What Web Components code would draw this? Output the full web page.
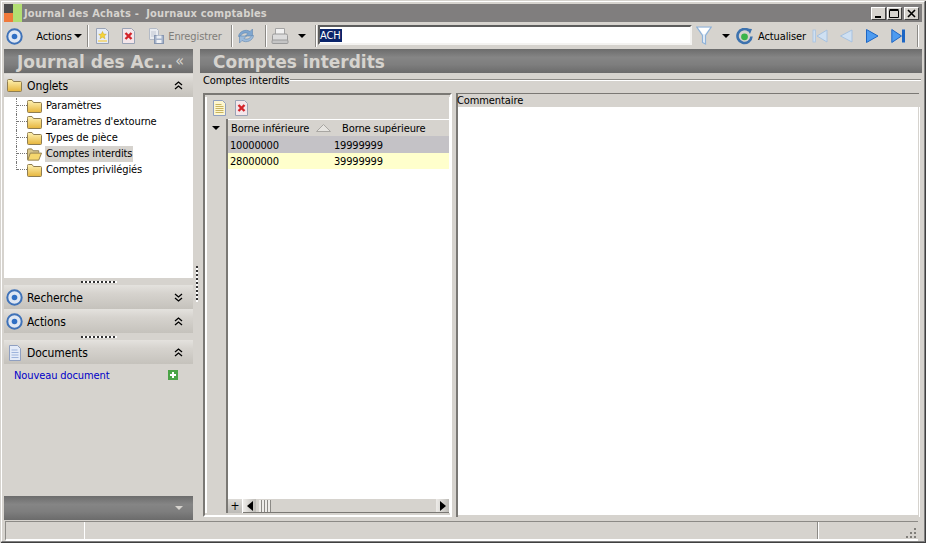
<!DOCTYPE html>
<html lang="fr"><head><meta charset="utf-8"><title>Journal des Achats</title>
<style>
html,body{margin:0;padding:0;background:#d6d3ce;overflow:hidden}
body{font:11px "DejaVu Sans Condensed","DejaVu Sans",sans-serif;font-stretch:condensed;color:#000}
</style></head><body>
<app-window>
  <win-titlebar slot="title">Journal des Achats -&nbsp; Journaux comptables</win-titlebar>
  <win-toolbar slot="toolbar"></win-toolbar>
  <nav-pane slot="nav"></nav-pane>
  <content-pane slot="content"></content-pane>
  <status-bar slot="status"></status-bar>
</app-window>
<script>
const FONT='"DejaVu Sans Condensed","DejaVu Sans",sans-serif';
const folderGrad=`<defs><linearGradient id="f" x1="0" y1="0" x2="0" y2="1"><stop offset="0" stop-color="#fff3b5"/><stop offset="1" stop-color="#e6b53c"/></linearGradient></defs>`;
const ICONS={
 target:`<svg width="17" height="17" viewBox="0 0 17 17"><circle cx="8.5" cy="8.5" r="7.2" fill="#dfe7f3" stroke="#3f72b8" stroke-width="2"/><circle cx="8.5" cy="8.5" r="2.8" fill="#2f6fc4"/></svg>`,
 folder:`<svg width="15" height="13" viewBox="0 0 15 13">${folderGrad}<path d="M.5 2.5V1.500Q.5.5 1.5.5H5l1.500 2h7q1 0 1 1v8q0 1-1 1h-12q-1 0-1-1z" fill="url(#f)" stroke="#8f7d50"/></svg>`,
 open:`<svg width="16" height="13" viewBox="0 0 16 13"><path d="M.5 12V1.500Q.5.5 1.500.5H5l1.500 2h6v2" fill="#d8c68a" stroke="#8f7d50"/><path d="M.8 12.500 3.500 5h12l-3 7.500z" fill="#f6d76e" stroke="#8f7d50"/></svg>`,
 doc:`<svg width="14" height="16" viewBox="0 0 14 16"><path d="M1.500.5h8l3 3v12h-11z" fill="#e4ebf8" stroke="#8f9fc0"/><path d="M3.500 5h6M3.500 7.500h7M3.500 10h7M3.500 12.500h7" stroke="#9db3dc"/></svg>`,
 newdoc:`<svg width="15" height="16" viewBox="0 0 15 16"><path d="M1.500.5h9l3 3v12h-12z" fill="#e6ecf6" stroke="#9aa3b5"/><path d="M7.500 3.500l1.100 2.600 2.700.2-2.100 1.700.8 2.700-2.500-1.500-2.500 1.500.8-2.700-2.100-1.700 2.700-.2z" fill="#f5d53a" stroke="#d0a91f" stroke-width=".5"/><path d="M3 13h9" stroke="#f0d98a" stroke-width="2"/></svg>`,
 griddoc:`<svg width="15" height="16" viewBox="0 0 15 16"><path d="M1.500.5h9l3 3v12h-12z" fill="#fdf6cf" stroke="#8f9fc0"/><path d="M3.500 4.500h6M3.500 6.500h8M3.500 8.500h8M3.500 10.500h8M3.500 12.500h8" stroke="#c9b45e"/></svg>`,
 deldoc:`<svg width="15" height="16" viewBox="0 0 15 16"><path d="M1.500.5h9l3 3v12h-12z" fill="#f4e6ea" stroke="#9aa3b5"/><path d="M4.500 5l6 6M10.500 5l-6 6" stroke="#d3232a" stroke-width="2.400"/></svg>`,
 save:`<svg width="16" height="16" viewBox="0 0 16 16"><path d="M1.500.5h7l2 2v9h-9z" fill="#e9ecf1" stroke="#b3bac6"/><path d="M3 4h5M3 6h5M3 8h5" stroke="#c0c6d2"/><rect x="6.500" y="7.500" width="9" height="8" fill="#a5b3ca" stroke="#8796b0"/><rect x="8.500" y="7.500" width="5" height="3" fill="#e8ecf2"/><rect x="8.500" y="12" width="5" height="3" fill="#f2f3f6"/></svg>`,
 sync:`<svg width="18" height="18" viewBox="0 0 18 18"><path d="M1.500 9.500C2 4.500 8.500 1.500 13 4.500L15.500 2v7h-7l2.500-2.500C8 5 4.500 6.500 3.500 9.500z" fill="#7fa6cf" stroke="#5f86b0" stroke-width=".6"/><path d="M16.500 8.500c-.5 5-7 8-11.500 5L2.500 16V9h7L7 11.500c3 1.500 6.500 0 7.500-3z" fill="#9dbbdb" stroke="#5f86b0" stroke-width=".6"/></svg>`,
 print:`<svg width="18" height="17" viewBox="0 0 18 17"><path d="M4.500.5h9v6h-9z" fill="#f2f2f2" stroke="#a4a4a4"/><path d="M1.500 7.500q0-1.500 1.500-1.500h12q1.500 0 1.500 1.500v5h-15z" fill="#dcdcdc" stroke="#9a9a9a"/><rect x="1" y="12" width="16" height="3.500" rx="1" fill="#c4c4c4" stroke="#9a9a9a"/></svg>`,
 funnel:`<svg width="16" height="20" viewBox="0 0 16 20"><path d="M.8 1h14.400L9.500 9.500V18l-3-1.500v-7z" fill="#e6eff9" stroke="#8fb2d8" stroke-width="1.200"/><path d="M2.500 2h11L9 8H7z" fill="#fff"/></svg>`,
 reload:`<svg width="17" height="17" viewBox="0 0 17 17"><path d="M12.800 2.500A7 7 0 1 0 15.500 8.500" fill="none" stroke="#3d72ae" stroke-width="2.600"/><path d="M10.500 .5l5.500 .5-2 5z" fill="#3d72ae"/><circle cx="8.500" cy="8.800" r="3.400" fill="#3bb44a"/></svg>`,
 first:`<svg width="16" height="16" viewBox="0 0 16 16"><rect x="1" y="2" width="2.500" height="12" fill="#cfe0f2" stroke="#a7c2e0" stroke-width=".8"/><path d="M15 2v12L5 8z" fill="#cfe0f2" stroke="#a7c2e0"/></svg>`,
 prev:`<svg width="16" height="16" viewBox="0 0 16 16"><path d="M14 2v12L2.500 8z" fill="#cfe0f2" stroke="#a7c2e0"/></svg>`,
 next:`<svg width="14" height="16" viewBox="0 0 14 16"><path d="M1.500 1.500v13L13 8z" fill="#4d9bf0" stroke="#1d66c4"/></svg>`,
 last:`<svg width="15" height="16" viewBox="0 0 15 16"><path d="M.8 1.500v13L10.500 8z" fill="#4d9bf0" stroke="#1d66c4"/><rect x="11" y="1.500" width="3" height="13" fill="#1d66c4"/></svg>`,
 up:`<svg width="9" height="9" viewBox="0 0 9 9"><path d="M1 4l3.500-3L8 4M1 8l3.500-3L8 8" fill="none" stroke="#000" stroke-width="1.300"/></svg>`,
 down:`<svg width="9" height="9" viewBox="0 0 9 9"><path d="M1 1l3.500 3L8 1M1 5l3.500 3L8 5" fill="none" stroke="#000" stroke-width="1.300"/></svg>`,
 caret:`<svg width="8" height="4" viewBox="0 0 8 4"><path d="M0 0h8L4 4z" fill="#000"/></svg>`,
 plus:`<svg width="10" height="10" viewBox="0 0 10 10"><rect width="10" height="10" fill="#4aa346"/><path d="M5 2v6M2 5h6" stroke="#fff" stroke-width="2"/></svg>`
};
const def=(name,css,html)=>customElements.define(name,class extends HTMLElement{
 constructor(){super();this.attachShadow({mode:'open'}).innerHTML=`<style>:host{font-stretch:condensed}${css}</style>`+(typeof html==='function'?html(this):html);}
 connectedCallback(){if(typeof html==='function'&&!this.done){this.done=1;this.shadowRoot.innerHTML=`<style>:host{font-stretch:condensed}${css}</style>`+html(this);}}
});
const BAND='linear-gradient(#6c6c6c,#858585 35%,#7e7e7e 65%,#6b6b6b)';

def('app-window',`
 :host{display:flex;flex-direction:column;box-sizing:border-box;width:926px;height:543px;background:#d6d3ce;
  padding:4px 4px 2px;box-shadow:inset 0 1px 0 #d6d3ce,inset 1px 0 0 #d6d3ce,inset -1px 0 0 #404040,inset 0 -1px 0 #404040;position:relative;
  font:11px ${FONT};letter-spacing:-.1px;color:#000;overflow:hidden}
 :host::before{content:"";position:absolute;inset:1px;border:1px solid;border-color:#fff #808080 #808080 #fff;pointer-events:none}
 .main{display:flex;flex:1;min-height:0}
`,`<slot name="title"></slot><slot name="toolbar"></slot><div class="main"><slot name="nav"></slot><nav-splitter></nav-splitter><slot name="content"></slot></div><slot name="status"></slot>`);

def('win-titlebar',`
 :host{display:flex;align-items:center;height:18px;background:#807e7e;color:#d6d3ce;font:bold 11px ${FONT};font-stretch:condensed;letter-spacing:.17px;flex:none}
 .logo{width:18px;height:18px;display:grid;grid-template-columns:9px 9px;grid-template-rows:9px 9px;margin-right:2px;flex:none}
 .t{flex:1;white-space:nowrap}
 .b{width:15px;height:13px;background:#d6d3ce;box-sizing:border-box;border:1px solid;border-color:#fff #404040 #404040 #fff;margin-left:1px;display:grid;place-items:center}
 .b+.b+.b{margin-left:2px;margin-right:3px}
`,`<div class="logo"><i style="background:#4b4b4b"></i><i style="background:#b2de72;grid-row:1/3;grid-column:2"></i><i style="background:#f0793a"></i></div>
 <div class="t"><slot></slot></div>
 <div class="b"><svg width="9" height="9"><rect x="1" y="7" width="6" height="2"/></svg></div>
 <div class="b"><svg width="11" height="9"><path d="M.5 1.500h9v7h-9zM.5.500h9" fill="none" stroke="#000"/></svg></div>
 <div class="b"><svg width="9" height="9"><path d="M1 1l7 7M8 1l-7 7" stroke="#000" stroke-width="1.600"/></svg></div>`);

const tb=(w,inner,ml=0)=>`<span class="i" style="width:${w}px;margin-left:${ml}px">${inner}</span>`;
def('win-toolbar',`
 :host{display:flex;align-items:center;box-sizing:border-box;height:26px;padding-top:2px;flex:none;background:#d6d3ce;white-space:nowrap}
 .i{display:inline-flex;align-items:center;justify-content:center;flex:none;height:22px}
 .sep{width:2px;height:22px;background:linear-gradient(90deg,#8c8a86 50%,#fff 50%);flex:none}
 .input{flex:none;width:374px;height:20px;box-sizing:border-box;margin:-2px 0 0 1px;border:2px solid;border-color:#5c5c5c #f4f3f1 #f4f3f1 #5c5c5c;background:#fff;display:flex;align-items:center}
 .input b{font-weight:normal;background:#0a246a;color:#fff;line-height:13px;padding:0 1px 0 0}
 .dis{color:#7f7d79}
`,`${tb(17,ICONS.target,2)}${tb(36,'Actions',13)}${tb(8,ICONS.caret,2)}<span class="sep" style="margin-left:5px"></span>
 ${tb(15,ICONS.newdoc,6)}${tb(15,ICONS.deldoc,11)}${tb(16,ICONS.save,12)}${tb(56,'<span class="dis">Enregistrer</span>',3)}<span class="sep" style="margin-left:8px"></span>
 ${tb(18,ICONS.sync,4)}<span class="sep" style="margin-left:10px"></span>${tb(18,ICONS.print,4)}${tb(8,ICONS.caret,9)}<span class="sep" style="margin-left:9px"></span>
 <div class="input"><b>ACH</b></div>
 ${tb(16,ICONS.funnel,4)}${tb(8,ICONS.caret,10)}${tb(17,ICONS.reload,6)}${tb(48,'Actualiser',5)}
 ${tb(16,ICONS.first,6)}${tb(16,ICONS.prev,10)}${tb(14,ICONS.next,11)}${tb(15,ICONS.last,12)}<span class="sep" style="margin-left:11px"></span>`);

def('band-title',`
 :host{display:flex;align-items:center;box-sizing:border-box;height:24px;background:${BAND};color:#d6d3ce;font:bold 17px "DejaVu Sans",sans-serif;font-stretch:normal;letter-spacing:0;white-space:nowrap;padding:2px 0 0 13px;flex:none;overflow:hidden}
 .t{flex:1}
 .c{font:normal 16px ${FONT};padding-right:9px;margin-top:-3px}
`,el=>`<span class="t"><slot></slot></span>${el.hasAttribute('collapse')?'<span class="c">«</span>':''}`);

def('acc-head',`
 :host{display:flex;align-items:center;box-sizing:border-box;height:24px;padding:1px 10px 0 2px;background:linear-gradient(#e4e2de,#d6d3ce 35%,#c5c2bc);font-size:12px;flex:none}
 :host([short]){height:23px;padding-top:0}
 .ic{width:17px;display:inline-flex;justify-content:center;margin-right:4px}
 .t{flex:1}
`,el=>`<span class="ic">${ICONS[el.getAttribute('icon')]}</span><span class="t"><slot></slot></span>${ICONS[el.getAttribute('dir')]}`);

def('grip-bar',`
 :host{display:flex;align-items:center;justify-content:center;height:7px;flex:none}
 i{width:36px;height:2px;background:repeating-linear-gradient(90deg,#333 0 2px,#fff 2px 4px)}
`,`<i></i>`);

def('tree-item',`
 :host{display:flex;align-items:center;height:16px}
 .l{width:11px;height:16px;position:relative;flex:none;margin-left:12px;box-sizing:border-box;border-left:1px dotted #777}
 :host([last]) .l{height:8px;align-self:flex-start}
 .l::after{content:"";position:absolute;left:0;right:0;top:7px;border-top:1px dotted #777}
 .ic{width:15px;margin-right:3px;display:inline-flex;flex:none}
 .t{padding:0 1px;line-height:16px;white-space:nowrap}
 :host([selected]) .t{background:#d6d3ce}
`,el=>`<span class="l"></span><span class="ic">${el.hasAttribute('selected')?ICONS.open:ICONS.folder}</span><span class="t"><slot></slot></span>`);

def('nav-pane',`
 :host{display:flex;flex-direction:column;width:189px;flex:none;min-height:0}
 .tree{background:#fff;height:181px;flex:none;box-sizing:border-box;padding-top:1px}
 .gap{height:1px;flex:none}
 .doc{display:flex;align-items:center;justify-content:space-between;box-sizing:border-box;padding:1px 15px 0 10px;height:21px;flex:none}
 .doc a{color:#0000c8;text-decoration:none}
 .fill{flex:1}
`,`<div class="gap"></div><band-title collapse>Journal des Ac...</band-title><div class="gap"></div>
 <acc-head short icon="folder" dir="up">Onglets</acc-head>
 <div class="tree"><tree-item>Paramètres</tree-item><tree-item>Paramètres d'extourne</tree-item><tree-item>Types de pièce</tree-item><tree-item selected>Comptes interdits</tree-item><tree-item last>Comptes privilégiés</tree-item></div>
 <grip-bar></grip-bar>
 <acc-head icon="target" dir="down">Recherche</acc-head>
 <acc-head icon="target" dir="up">Actions</acc-head>
 <grip-bar></grip-bar>
 <acc-head icon="doc" dir="up">Documents</acc-head>
 <div class="doc"><a>Nouveau document</a>${ICONS.plus}</div>
 <div class="fill"></div>
 <bottom-band></bottom-band>`);

def('bottom-band',`
 :host{display:flex;align-items:center;justify-content:flex-end;height:24px;background:${BAND};padding-right:10px;flex:none}
 svg path{fill:#d6d3ce}
`,ICONS.caret);

def('nav-splitter',`
 :host{display:flex;align-items:center;justify-content:center;width:7px;flex:none}
 i{width:2px;height:36px;background:repeating-linear-gradient(#333 0 2px,#fff 2px 4px)}
`,`<i></i>`);

def('content-pane',`
 :host{display:flex;flex-direction:column;flex:1;min-width:0}
 .gap{height:1px;flex:none}
 .legend{display:flex;align-items:center;height:13px;margin:1px 1px 0 3px;flex:none;white-space:nowrap}
 .legend i{flex:1;height:2px;background:linear-gradient(#8c8a86 50%,#fff 50%);margin:0 0 1px 1px}
 .split{display:flex;flex:1;min-height:0;margin:6px 3px 3px 3px}
 .left{width:249px;box-sizing:border-box;border:solid;border-width:2px;border-color:#7a7874 #fff #fff #7a7874;flex:none;display:flex;flex-direction:column;padding:2px 0}
 .right{flex:1;margin-left:4px;display:flex;flex-direction:column;min-width:0;border-top:1px solid #7a7874;border-left:2px solid #7a7874}
 .right .h{height:13px;line-height:13px;flex:none;margin-left:-1px}
 .right .b{flex:1;background:#fff;border:solid #d6d3ce;border-width:0 1px 2px 0;box-shadow:1px 0 0 #fff}
`,`<div class="gap"></div><band-title>Comptes interdits</band-title>
 <div class="legend">Comptes interdits<i></i></div>
 <div class="split"><div class="left"><data-grid></data-grid></div>
 <div class="right"><div class="h">Commentaire</div><div class="b"></div></div></div>`);

def('data-grid',`
 :host{display:flex;flex-direction:column;flex:1;min-height:0;border-left:2px solid #fff;border-right:1px solid #fff}
 .tools{height:22px;display:flex;align-items:center;gap:7px;padding:0 0 1px 5px;flex:none;box-sizing:border-box}
 .body{flex:1;display:flex;min-height:0}
 .gut{width:19px;flex:none;border-right:2px solid #7a7874;display:flex;flex-direction:column}
 .gut span{height:17px;display:flex;align-items:center;justify-content:center;padding-right:2px}
 .tbl{flex:1;display:flex;flex-direction:column;min-width:0}
 .head{height:17px;display:flex;align-items:center;border-top:1px solid #fff;box-sizing:border-box;flex:none;white-space:nowrap}
 .head .a{margin-left:3px;width:78px}.head .s{width:15px;margin-left:7px;margin-right:11px;display:inline-flex}
 .row{height:17px;display:flex;align-items:center;flex:none;letter-spacing:-.2px;box-sizing:border-box}
 .row span:first-child{width:104px;padding-left:2px}
 .r1{background:#c4c2c6;padding-top:1px}.r2{background:#ffffcc;height:16px}
 .white{flex:1;background:#fff}
 .foot{height:14px;display:flex;flex:none;background:#fff;align-items:stretch}
 .p{width:14px;display:grid;place-items:center;background:linear-gradient(#dcdad6,#bcbab6);font-size:12px;line-height:1;margin-right:1px;padding-bottom:1px;box-sizing:border-box}
 .sb{flex:1;display:flex;align-items:center;background:#d6d3ce;border-bottom:1px solid #7a7874;box-sizing:border-box}
 .ar{width:13px;height:13px;background:linear-gradient(90deg,#eeece9,#bdbbb6);display:grid;place-items:center;flex:none}
 .th{width:12px;height:12px;margin-left:3px;background:repeating-linear-gradient(90deg,#eeece9 0 2px,#8c8a86 2px 3px);flex:none}
 .sp{flex:1}
`,`<div class="tools">${ICONS.griddoc}${ICONS.deldoc}</div>
 <div class="body"><div class="gut"><span>${ICONS.caret}</span></div>
 <div class="tbl">
  <div class="head"><span class="a">Borne inférieure</span><span class="s"><svg width="15" height="8"><path d="M.5 7.500h14L7.500.5z" fill="#e6e4e0" stroke="#a8a6a2"/></svg></span><span>Borne supérieure</span></div>
  <div class="row r1"><span>10000000</span><span>19999999</span></div>
  <div class="row r2"><span>28000000</span><span>39999999</span></div>
  <div class="white"></div>
  <div class="foot"><div class="p">+</div><div class="sb"><div class="ar"><svg width="6" height="10"><path d="M6 0v10L0 5z"/></svg></div><div class="th"></div><div class="sp"></div><div class="ar"><svg width="6" height="10"><path d="M0 0v10l6-5z"/></svg></div></div></div>
 </div></div>`);

def('status-bar',`
 :host{display:flex;height:20px;flex:none;margin-top:1px;box-sizing:border-box;border-top:1px solid #8c8a86;border-bottom:2px solid #fff;margin-left:1px;margin-right:4px;border-left:1px solid #8c8a86}
 div{box-sizing:border-box}
 .a{width:79px;border-right:1px solid #fff}
 .b{flex:1;border-right:1px solid #8c8a86}
 .c{width:100px;border-left:1px solid #fff;display:flex;justify-content:flex-end;align-items:flex-end;padding:0 1px 0 0}
`,`<div class="a"></div><div class="b"></div><div class="c"><svg width="12" height="12"><g fill="#807e7a"><rect x="9" y="1" width="2" height="2"/><rect x="5" y="5" width="2" height="2"/><rect x="9" y="5" width="2" height="2"/><rect x="1" y="9" width="2" height="2"/><rect x="5" y="9" width="2" height="2"/><rect x="9" y="9" width="2" height="2"/></g></svg></div>`);
</script>
</body></html>
